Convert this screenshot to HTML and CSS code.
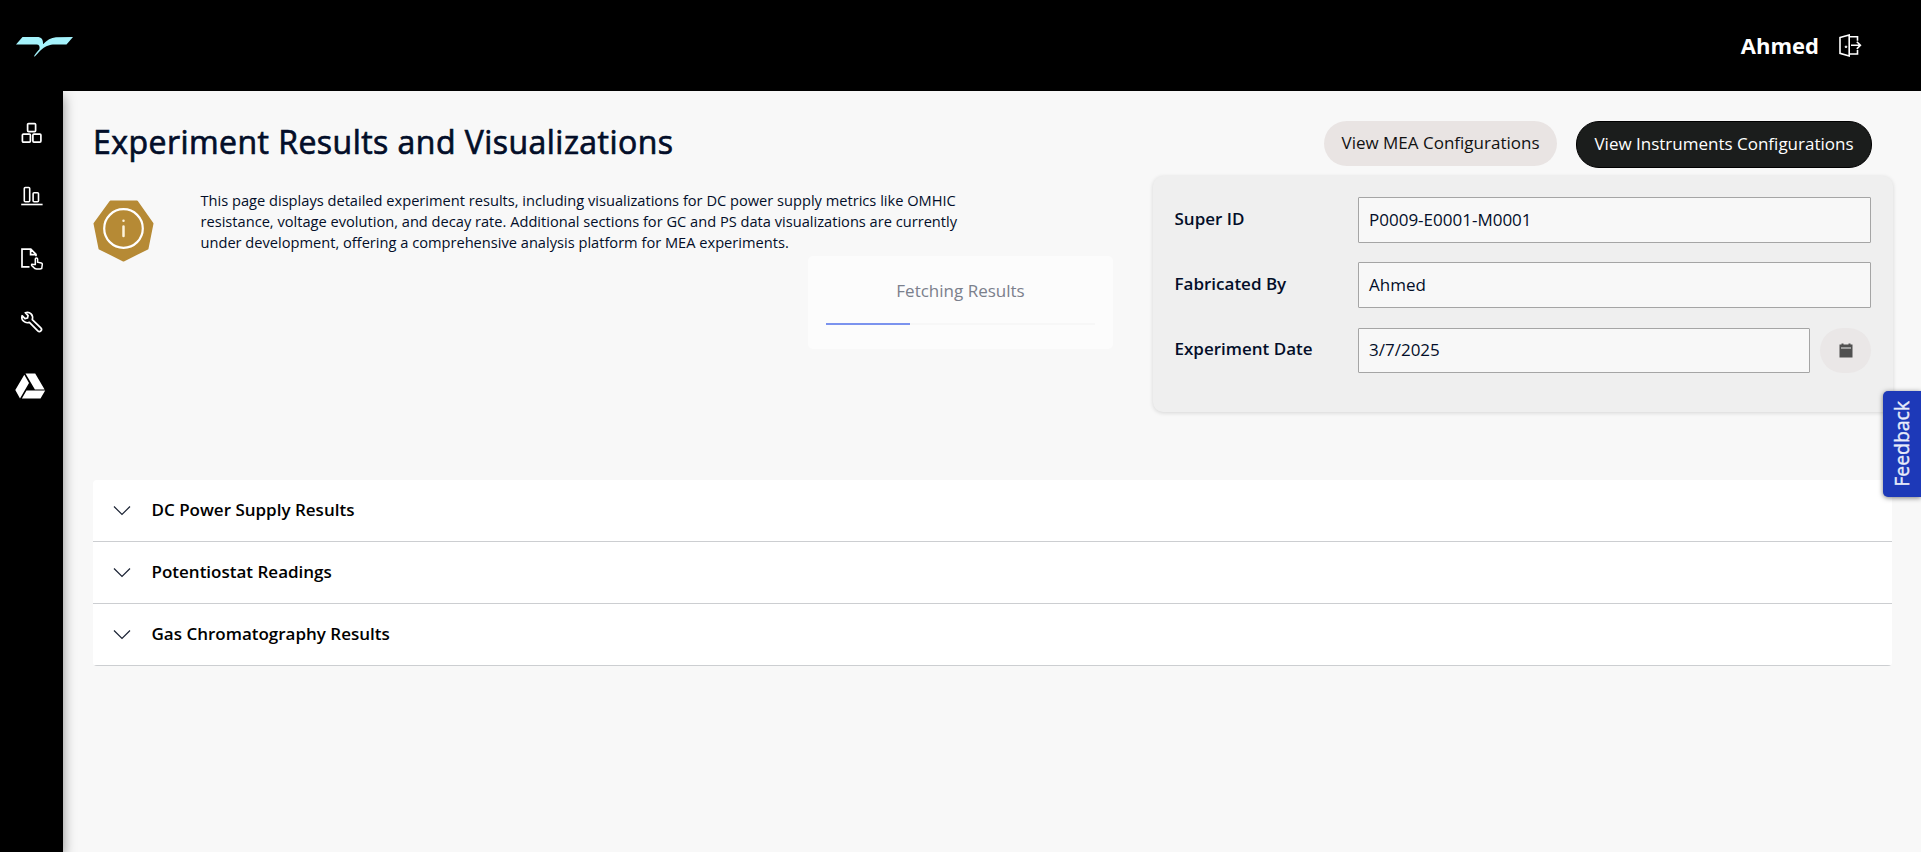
FILE: index.html
```html
<!DOCTYPE html>
<html lang="en">
<head>
<meta charset="utf-8">
<title>Experiment Results and Visualizations</title>
<link rel="stylesheet" href="styles.css">
</head>
<body>
<header class="topbar">
  <svg class="logo" width="58" height="22" viewBox="0 0 58 22"><path fill="#a5f3fc" d="M6.500 1H21c4.500 0 6.200 2 6 7.300C31 4 35 1.500 40 1.200L57 1l-6.500 7.500H39c-6 .1-9 1.700-12.500 4.200C23.500 15 21.500 17.500 18.800 20.500l-.8-.3c1.500-2.600 3.600-4.800 5.400-6.900C24 10.500 23.200 8.500 20.500 8.500H0z"/></svg>
  <div class="user">
    <span class="user-name">Ahmed</span>
    <svg class="logout" width="24" height="24" viewBox="0 0 24 24" fill="none" stroke="#fff" stroke-width="1.600"><path d="M2 3.500 11.200 1v21L2 19.300zM11.200 2.700h8.300v4M11.200 20h8.300v-4M13 11.300h9M18.800 7.700l3.600 3.600-3.600 3.600"/><circle cx="8" cy="12.800" r=".9" fill="#fff" stroke-width=".8"/></svg>
  </div>
</header>
<div class="shell">
  <nav class="sidebar">
    <svg width="24" height="24" viewBox="0 0 24 24" fill="none" stroke="#fff" stroke-width="1.700"><rect x="7.600" y="2.600" width="8" height="8" rx="1"/><rect x="2.400" y="13.100" width="8" height="8" rx="1"/><rect x="12.900" y="13.100" width="8" height="8" rx="1"/></svg>
    <svg width="24" height="24" viewBox="0 0 24 24" fill="none" stroke="#fff" stroke-width="1.600"><rect x="4.300" y="3.500" width="5.400" height="14.200" rx="1"/><rect x="13.100" y="8.800" width="5.400" height="8.900" rx="1"/><path d="M1.200 20.500h21.400"/></svg>
    <svg width="24" height="24" viewBox="0 0 24 24" fill="none" stroke="#fff" stroke-width="1.700"><path d="M9.500 19.800H2V2.200h8.800l5.200 5.200v1.800M10.600 2.400v5.300h5.200"/><path stroke-width="1.500" d="M15.300 17.500V12c0-1.500 2.300-1.500 2.300 0v3.200l3.700.8c.8.200 1.100.7 1 1.500l-.6 4c-2.200.8-4.600.8-6.800 0l-3.200-3c-.6-1.300.8-1.600 1.700-1z"/></svg>
    <svg width="24" height="24" viewBox="0 0 24 24" fill="none" stroke="#fff" stroke-width="1.700" stroke-linejoin="round"><path d="M2.100 5.700 5 8.600l2.500-.6.600-2.400-2.800-2.900C10 1.300 13.600 4.700 12.300 9.600l8.500 8.200c2.100 2.100-.9 5.100-3 3l-8.400-8.400C4.900 13.800.8 10.100 2.100 5.700z"/></svg>
    <svg class="drive" width="31" height="26" viewBox="0 0 31 26" fill="#fff"><path d="M10.500.5h9.700l9.400 15.900H19.900zM9.300 1.800l4.700 8.300L5 25.400.3 17zM11.500 17.600h18.700l-4.700 7.900H6.900z"/></svg>
  </nav>
  <main class="content">
    <section class="overview">
      <div class="intro">
        <h1>Experiment Results and Visualizations</h1>
        <div class="intro-body">
          <svg class="info" width="61" height="62" viewBox="0 0 61 62"><path fill="#b68a35" stroke="#b68a35" stroke-width="2" stroke-linejoin="round" d="M17.500 1.500h26.500L59.500 23.500 54.500 48.500 30.500 60.500 6.500 48.500 1.500 23.500z"/><circle cx="30.500" cy="28.500" r="19.300" fill="none" stroke="#fff" stroke-width="2.200"/><path stroke="#fdf4dc" stroke-width="2.500" stroke-linecap="round" d="M30.500 26.500v9.500M30.500 20.700v.1"/></svg>
          <p>This page displays detailed experiment results, including visualizations for DC power supply metrics like OMHIC<br>resistance, voltage evolution, and decay rate. Additional sections for GC and PS data visualizations are currently<br>under development, offering a comprehensive analysis platform for MEA experiments.</p>
        </div>
      </div>
      <div class="details">
        <div class="actions">
          <button class="btn btn-light">View MEA Configurations</button>
          <button class="btn btn-dark">View Instruments Configurations</button>
        </div>
        <div class="card">
          <div class="field"><label>Super ID</label><div class="input">P0009-E0001-M0001</div></div>
          <div class="field"><label>Fabricated By</label><div class="input">Ahmed</div></div>
          <div class="field date"><label>Experiment Date</label><div class="input">3/7/2025</div>
            <button class="calendar"><svg width="14" height="15" viewBox="0 0 14 15"><path fill="#505050" d="M.5 1.500h2V.4h2v1.100h5V.4h2v1.100h2v13H.5z"/><path stroke="#eee" d="M2 5h10"/></svg></button>
          </div>
        </div>
      </div>
    </section>
    <section class="accordion">
      <div class="row"><svg width="18" height="11" viewBox="0 0 18 11"><path d="M1 1.500l8 8 8-8"/></svg><span>DC Power Supply Results</span></div>
      <div class="row"><svg width="18" height="11" viewBox="0 0 18 11"><path d="M1 1.500l8 8 8-8"/></svg><span>Potentiostat Readings</span></div>
      <div class="row"><svg width="18" height="11" viewBox="0 0 18 11"><path d="M1 1.500l8 8 8-8"/></svg><span>Gas Chromatography Results</span></div>
    </section>
  </main>
</div>
<div class="toast"><span>Fetching Results</span><div class="progress"><div class="progress-bar"></div></div></div>
<div class="feedback"><span>Feedback</span></div>
</body>
</html>
```
FILE: styles.css
```css
* { box-sizing: border-box; }
body {
  margin: 0;
  height: 852px;
  overflow: hidden;
  display: flex;
  flex-direction: column;
  background: #f8f8f8;
  color: #030e29;
  font-family: "Open Sans", "Noto Sans", sans-serif;
}
button { font: inherit; border: 0; padding: 0; }
.topbar {
  height: 91px;
  flex: none;
  background: #000;
  display: flex;
  align-items: center;
  justify-content: space-between;
  padding: 0 59px 0 16px;
}
.logo { margin-top: 2px; }
.user { display: flex; align-items: center; gap: 19px; color: #fff; }
.user-name { font-size: 22px; font-weight: 700; line-height: 30px; padding-bottom: 2px; }
.shell { flex: 1; display: flex; }
.sidebar {
  width: 63px;
  flex: none;
  background: #000;
  box-shadow: 0 5px 12px rgba(0, 0, 0, .45);
  display: flex;
  flex-direction: column;
  align-items: center;
  padding-top: 30px;
  gap: 39px;
}
.drive { margin-right: 2px; }
.content { flex: 1; padding: 30px 29px 0 30px; clip-path: inset(0 0 0 -1px); }
.overview { display: flex; justify-content: space-between; height: 360px; }
h1 {
  margin: -1px 0 0;
  font-size: 32px;
  font-weight: 400;
  line-height: 44px;
  letter-spacing: .46px;
  -webkit-text-stroke: .7px currentColor;
  white-space: nowrap;
}
.intro-body { display: flex; gap: 46.500px; padding-top: 26px; }
.info { margin-top: 10px; flex: none; }
.intro p { margin: 0; font-size: 14.630px; line-height: 21px; white-space: nowrap; }
.details { width: 740px; margin-right: -1px; }
.actions { display: flex; justify-content: flex-end; align-items: flex-start; gap: 19px; padding-right: 21px; height: 55px; }
.btn { font-size: 17px; border-radius: 23px; white-space: nowrap; padding-bottom: 2px; }
.btn-light { width: 233px; height: 45px; background: #e9e4e3; color: #111; }
.btn-dark { width: 296px; height: 47px; background: #1b1d1c; border: 1px solid #000; color: #fff; }
.card {
  height: 236px;
  background: #efefef;
  border-radius: 10px;
  box-shadow: 0 1px 4px rgba(0, 0, 0, .14);
  padding: 21px 22px 0 21.500px;
  display: flex;
  flex-direction: column;
  gap: 19px;
}
.field { display: flex; align-items: center; height: 46px; }
.field label { width: 183.500px; font-size: 17px; font-weight: 600; padding-bottom: 4px; }
.input {
  flex: 1;
  height: 46px;
  border: 1px solid #a5a5a5;
  border-radius: 1px;
  background: #f8f8f8;
  padding-left: 10px;
  font-size: 17px;
  line-height: 43px;
}
.date .input { height: 45px; line-height: 42px; }
.date { padding-top: 1px; }
.calendar {
  width: 51px;
  height: 45px;
  margin-left: 10px;
  border-radius: 23px;
  background: #eae7e7;
  display: flex;
  align-items: center;
  justify-content: center;
}
.accordion { background: #fff; border-radius: 4px; overflow: hidden; margin-top: -1px; }
.row {
  height: 62px;
  border-bottom: 1px solid #ccced1;
  display: flex;
  align-items: center;
  padding: 0 0 1px 20px;
  gap: 20.500px;
  color: #000;
  font-size: 17px;
  font-weight: 600;
}
.row span { padding-bottom: 1px; }
.row svg { fill: none; stroke: #1a2233; stroke-width: 1.200; }
.toast {
  position: absolute;
  left: 808px;
  top: 256px;
  width: 305px;
  height: 93px;
  border-radius: 5px;
  background: #fcfcfc;
  padding: 22px 18px 0;
  text-align: center;
  font-size: 17px;
  line-height: 26px;
  color: #7b808c;
}
.progress { height: 2px; margin-top: 19px; background: #f7f7f7; text-align: left; }
.progress-bar { width: 84px; height: 2px; background: #7b93ee; }
.feedback {
  position: absolute;
  right: 0;
  top: 391px;
  width: 38px;
  height: 106px;
  border-radius: 5px 0 0 5px;
  background: #1d39b8;
  box-shadow: 0 1px 5px rgba(0, 0, 0, .5);
  color: #e9ecfa;
  font-size: 19.400px;
  -webkit-text-stroke: .4px currentColor;
  display: flex;
  align-items: center;
  justify-content: center;
  padding-right: 1px;
}
.feedback span { writing-mode: vertical-rl; transform: rotate(180deg); }
```
